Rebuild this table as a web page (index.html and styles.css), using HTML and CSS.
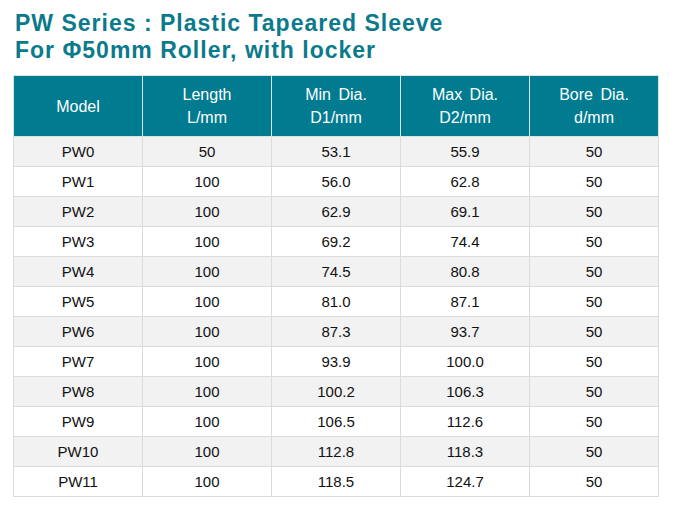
FILE: index.html
```html
<!DOCTYPE html>
<html lang="en">
<head>
  <meta charset="UTF-8" />
  <title>PW Series</title>
  <link rel="stylesheet" href="styles.css">
</head>
<body>
  <div class="page">
    <h1 class="title">PW Series : Plastic Tapeared Sleeve<br>For &Phi;50mm Roller, with locker</h1>

    <table class="spec">
      <thead>
        <tr>
          <th>Model</th>
          <th>Length<br>L/mm</th>
          <th>Min Dia.<br>D1/mm</th>
          <th>Max Dia.<br>D2/mm</th>
          <th>Bore Dia.<br>d/mm</th>
        </tr>
      </thead>
      <tbody>
        <tr><td>PW0</td><td>50</td><td>53.1</td><td>55.9</td><td>50</td></tr>
        <tr><td>PW1</td><td>100</td><td>56.0</td><td>62.8</td><td>50</td></tr>
        <tr><td>PW2</td><td>100</td><td>62.9</td><td>69.1</td><td>50</td></tr>
        <tr><td>PW3</td><td>100</td><td>69.2</td><td>74.4</td><td>50</td></tr>
        <tr><td>PW4</td><td>100</td><td>74.5</td><td>80.8</td><td>50</td></tr>
        <tr><td>PW5</td><td>100</td><td>81.0</td><td>87.1</td><td>50</td></tr>
        <tr><td>PW6</td><td>100</td><td>87.3</td><td>93.7</td><td>50</td></tr>
        <tr><td>PW7</td><td>100</td><td>93.9</td><td>100.0</td><td>50</td></tr>
        <tr><td>PW8</td><td>100</td><td>100.2</td><td>106.3</td><td>50</td></tr>
        <tr><td>PW9</td><td>100</td><td>106.5</td><td>112.6</td><td>50</td></tr>
        <tr><td>PW10</td><td>100</td><td>112.8</td><td>118.3</td><td>50</td></tr>
        <tr><td>PW11</td><td>100</td><td>118.5</td><td>124.7</td><td>50</td></tr>
      </tbody>
    </table>
  </div>
</body>
</html>
```

FILE: styles.css
```css
* {
  box-sizing: border-box;
}

body {
  margin: 0;
  background: #ffffff;
  font-family: "Liberation Sans", Arial, sans-serif;
}

.page {
  padding: 10px 0 0 13px;
}

.title {
  margin: 0 0 11px 2px;
  font-size: 23px;
  line-height: 27px;
  font-weight: bold;
  color: #0a7a8c;
  letter-spacing: 1px;
}

.spec {
  border-collapse: collapse;
  width: 645px;
  table-layout: fixed;
}

.spec th,
.spec td {
  width: 129px;
  text-align: center;
  padding: 0;
}

.spec th {
  height: 61px;
  background: #007b8f;
  color: #ffffff;
  font-weight: normal;
  font-size: 16px;
  line-height: 23px;
  word-spacing: 3px;
  border: 1px solid #d8e4e6;
}

.spec td {
  height: 30px;
  font-size: 15px;
  color: #111111;
  border: 1px solid #dcdcdc;
}

.spec tbody tr:nth-child(odd) td {
  background: #f2f2f2;
}
```
